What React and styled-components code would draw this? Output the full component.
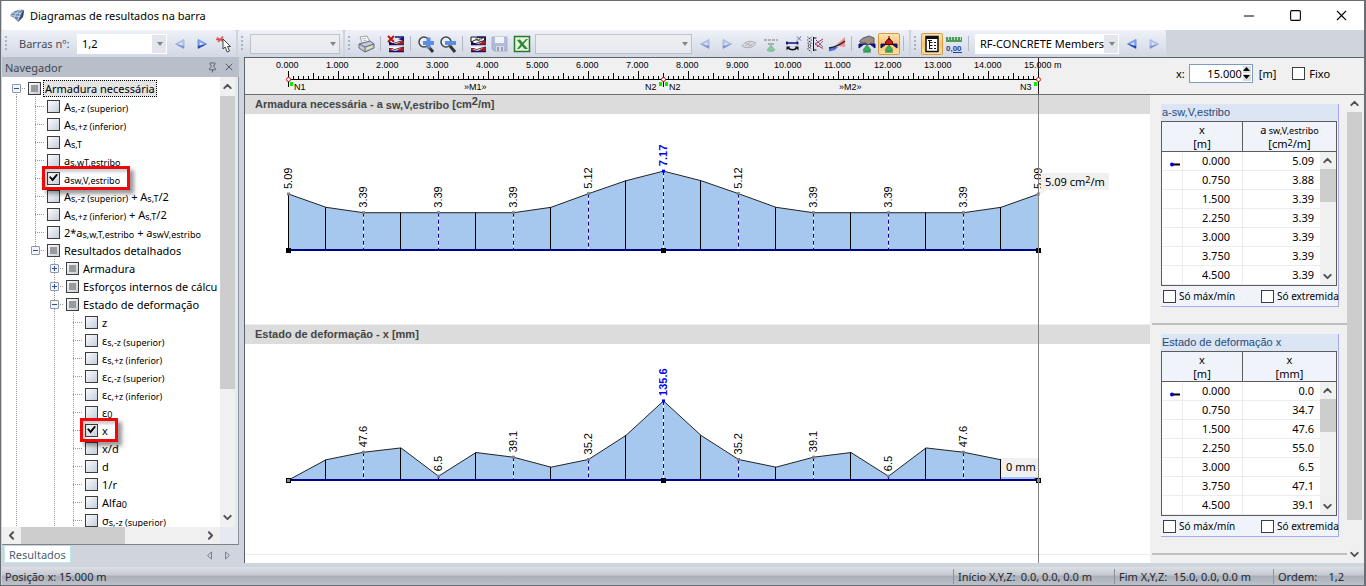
import React, { useState } from 'react';
import styled, { createGlobalStyle, css } from 'styled-components';
import { ChevronUp, ChevronDown, ChevronLeft, ChevronRight, X, Square, Minus, Pin } from 'lucide-react';

const ui = `'Noto Sans', 'Open Sans', sans-serif`;
const arial = `'Liberation Sans', Arial, sans-serif`;

const GlobalStyle = createGlobalStyle`
    * { box-sizing: border-box; }
    body { margin: 0; background: #d0d4dd; font-family: ${ui}; font-size: 11px; color: #000; }
    button, input, select { font: inherit; color: inherit; margin: 0; padding: 0; }
    button { border: 0; background: none; }
`;

const Window = styled.div`
    height: 100vh;
    display: flex;
    flex-direction: column;
    background: #d0d4dd;
    border: solid #6a6f76;
    border-width: 1px 2px 1px 1px;
    padding-left: 1px;
    overflow: hidden;
`;

const TitleBar = styled.header`
    height: 29px;
    flex: none;
    display: flex;
    align-items: center;
    background: #fff;
    padding-left: 7px;
`;

const Title = styled.h1`
    flex: 1;
    margin: 0 0 0 5px;
    font-size: 11px;
    font-weight: 400;
`;

const WindowButton = styled.button`
    width: 46px;
    height: 29px;
    display: grid;
    place-items: center;
`;

const Toolbars = styled.div`
    height: 27px;
    flex: none;
    display: flex;
    gap: 2px;
`;

const Toolbar = styled.div`
    display: flex;
    align-items: center;
    padding-right: 1px;
    border-radius: 2px;
    background: linear-gradient(#eef1f7, #dde2ec 60%, #d2d8e4);
`;

const Grip = styled.span`
    width: 10px;
    height: 17px;
    background: radial-gradient(circle, #aab2c0 1px, transparent 1px) 2px 0 / 4px 4px repeat-y;
`;

const ToolLabel = styled.label`
    width: 63px;
    padding-left: 7px;
    color: #444a55;
`;

const Divider = styled.span`
    width: 8px;
    height: 15px;
    background: linear-gradient(#b3b9c4, #b3b9c4) 3px 0 / 1px 100% no-repeat;
`;

const IconButton = styled.button`
    width: 22px;
    height: 22px;
    display: grid;
    place-items: center;
    border-radius: 2px;
    ${p => p.$active && css`
        border: 1px solid #d89a3c;
        background: linear-gradient(#fde3b4, #fbc46c 50%, #fddf9e);
    `}
    &:disabled { opacity: 0.5; }
`;

const SelectBox = styled.div`
    position: relative;
    width: ${p => p.$width}px;
    height: 20px;
    margin: 0 2px;
`;

const Select = styled.select`
    appearance: none;
    width: 100%;
    height: 100%;
    padding: 0 4px;
    border: 1px solid #fff;
    border-radius: 0;
    background: linear-gradient(90deg, #e2e5ec, #e2e5ec) right / 14px 100% no-repeat #fff;
    &:disabled {
        border-color: #b0b4ba;
        background: #eff0f2;
    }
`;

const SelectArrow = styled.span`
    position: absolute;
    right: 4px;
    top: 8px;
    border: 3px solid transparent;
    border-top: 4px solid #80848c;
    border-bottom: 0;
    pointer-events: none;
`;

const Body = styled.div`
    flex: 1;
    min-height: 0;
    display: flex;
`;

const Sidebar = styled.aside`
    width: 237px;
    flex: none;
    margin-right: 5px;
    display: flex;
    flex-direction: column;
`;

const SideHeader = styled.div`
    height: 20px;
    flex: none;
    display: flex;
    align-items: center;
    gap: 5px;
    padding: 0 4px 0 3px;
    background: #b8bfca;
    color: #3f4650;
    h2 { flex: 1; margin: 0; font-size: 11px; font-weight: 400; }
    button { display: grid; color: #555b65; }
`;

const TreePanel = styled.div`
    flex: 1;
    min-height: 0;
    display: grid;
    grid-template: minmax(0, 1fr) 17px / minmax(0, 1fr) 15px;
    padding-right: 3px;
    background: #e6e9ef;
    border-right: 1px solid #8e949e;
    border-bottom: 1px solid #7d828a;
`;

const Tree = styled.ul`
    margin: 0;
    padding: 2px 0 0 5px;
    list-style: none;
    overflow: hidden;
    background: #fff;
`;

const TreeRow = styled.li`
    height: 18px;
    display: flex;
    white-space: nowrap;
`;

const dotted = 'repeating-linear-gradient(#999 0 1px, transparent 1px 2px)';
const dottedH = 'repeating-linear-gradient(90deg, #999 0 1px, transparent 1px 2px)';

const Guide = styled.span`
    width: 19px;
    height: 18px;
    flex: none;
    display: grid;
    place-items: center;
    background-repeat: no-repeat;
    background-image: ${dotted}, ${dottedH};
    background-position: 9px ${p => (p.$line === 'bottom' ? '9px' : '0')}, 9px 9px;
    background-size: ${p => (p.$line === 'none' ? '0 0' : p.$line === 'full' ? '1px 18px' : '1px 9px')},
        ${p => (p.$elbow ? '10px 1px' : '0 0')};
`;

const Expander = styled.button`
    width: 9px;
    height: 9px;
    border: 1px solid #8f98a6;
    border-radius: 1px;
    background:
        linear-gradient(#2a50a8, #2a50a8) center / 5px 1px no-repeat,
        linear-gradient(#2a50a8, #2a50a8) center / 1px ${p => (p.$open ? 0 : 5)}px no-repeat,
        #f4f5f8;
`;

const Check = styled.input`
    appearance: none;
    flex: none;
    width: 13px;
    height: 13px;
    border: 1px solid #3d3d3d;
    background: ${p => (p.$flat ? '#fff' : 'linear-gradient(135deg, #fafbfc, #c6cedb)')};
    display: grid;
    place-items: center;
    &::before {
        content: '';
        width: ${p => (p.$partial ? 7 : 9)}px;
        height: ${p => (p.$partial ? 7 : 9)}px;
        ${p => p.$partial && 'background: #9a9a9a;'}
    }
    &:checked::before {
        background: #000;
        clip-path: polygon(0 40%, 18% 30%, 38% 55%, 82% 5%, 100% 15%, 40% 90%);
    }
`;

const TreeItem = styled.label`
    position: relative;
    display: flex;
    align-items: center;
    gap: 2px;
    margin-left: 2px;
    ${p => p.$marked && css`
        z-index: 1;
        &::after {
            content: '';
            position: absolute;
            inset: -3px -8px -3px -5px;
            border: 3px solid #f00808;
            box-shadow: 4px 4px 4px rgba(0, 0, 0, 0.4), inset 3px 3px 3px rgba(0, 0, 0, 0.2);
        }
    `}
`;

const ItemText = styled.span`
    padding: 0 1px;
    line-height: 15px;
    border: 1px solid transparent;
    ${p => p.$focus && 'border: 1px dotted #000; background: #e4e4e4;'}
    sub {
        font-size: 9px;
        line-height: 9px;
        vertical-align: -1px;
    }
`;

const ScrollTrack = styled.div`
    display: flex;
    flex-direction: ${p => (p.$horizontal ? 'row' : 'column')};
    background: #f0f0f0;
    button {
        flex: none;
        width: ${p => (p.$horizontal ? p.$end : 15)}px;
        height: ${p => (p.$horizontal ? 17 : p.$end)}px;
        display: grid;
        place-items: center;
        color: #505050;
    }
`;

const ScrollRail = styled.div`
    flex: 1;
    min-width: 0;
    min-height: 0;
`;

const ScrollThumb = styled.div`
    background: #cdcdcd;
    ${p => (p.$horizontal ? `width: ${p.$size}%; height: 100%;` : `height: ${p.$size}%;`)}
`;

const SideTabs = styled.div`
    height: 22px;
    flex: none;
    display: flex;
    align-items: flex-start;
    padding: 1px 4px 0 2px;
    gap: 2px;
`;

const Tab = styled.button`
    height: 17px;
    padding: 0 4px;
    margin-right: auto;
    color: #4a5f75;
    background: #fff;
    border: solid #b8e8ec;
    border-width: 0 1px 1px;
    border-radius: 0 0 2px 2px;
`;

const TabArrow = styled.button`
    width: 16px;
    height: 18px;
    display: grid;
    place-items: center;
`;

const Main = styled.main`
    flex: 1;
    min-width: 0;
    display: flex;
    flex-direction: column;
    border: solid #5e6268;
    border-width: 1px 0 0 1px;
    margin-bottom: 4px;
    background: #f0f0f0;
`;

const RulerRow = styled.div`
    height: 37px;
    flex: none;
    display: flex;
    border-bottom: 1px solid #6e6e6e;
`;

const Ruler = styled.svg`
    flex: 1;
    min-width: 0;
    height: 36px;
    font-family: ${arial};
    font-size: 9px;
`;

const Position = styled.div`
    width: 214px;
    display: flex;
    align-items: center;
    padding: 0 0 6px 26px;
    label { display: flex; align-items: center; gap: 4px; }
`;

const NumberBox = styled.span`
    width: 64px;
    height: 19px;
    display: flex;
    border: 1px solid #7a9cc4;
    background: #fff;
    margin-right: 6px;
    input {
        width: 52px;
        border: 0;
        background: none;
        text-align: right;
        outline: none;
    }
`;

const Spin = styled.span`
    display: flex;
    flex-direction: column;
    gap: 1px;
    margin-left: 1px;
    padding: 1px 0;
    button {
        width: 8px;
        height: 7px;
        display: grid;
        place-items: center;
        background: #dcdcdc;
    }
`;

const FixedLabel = styled.label`
    margin-left: 16px;
`;

const Results = styled.div`
    flex: 1;
    min-height: 0;
    display: flex;
    padding-right: 2px;
`;

const Sections = styled.div`
    position: relative;
    flex: 1;
    min-width: 0;
    overflow: hidden;
    background: linear-gradient(90deg, #fff, #fff) left / calc(100% - 197px) 100% no-repeat #f0f0f0;
`;

const CursorLine = styled.div`
    position: absolute;
    top: 0;
    bottom: 0;
    left: 793px;
    width: 1px;
    background: #808080;
`;

const Section = styled.section`
    height: 230px;
    display: flex;
`;

const ChartArea = styled.div`
    flex: 1;
    min-width: 0;
    border-bottom: 1px solid #ececec;
`;

const ChartTitle = styled.h3`
    height: 19px;
    margin: 0;
    padding-left: 10px;
    background: #dcdcdc;
    font: bold 11px/19px ${arial};
    color: #444;
    sub, sup { font-size: 11px; line-height: 10px; }
    sub { vertical-align: -1px; }
    sup { vertical-align: 3px; }
`;

const Plot = styled.svg`
    display: block;
    width: 100%;
    height: 210px;
    font-family: ${arial};
    font-size: 11px;
`;

const SidePanel = styled.div`
    width: 195px;
    margin-left: 2px;
    padding: 9px 8px 0 9px;
    border-bottom: 2px solid #c0c0c0;
`;

const Group = styled.div`
    height: 203px;
    background: #f0f4fa;
    border: solid #a8a8ee;
    border-width: 0 1px 1px 0;
`;

const GroupTitle = styled.h4`
    height: 17px;
    margin: 0;
    padding-left: 1px;
    background: #dbe5f3;
    font: 11px/17px ${arial};
    color: #1f4a7a;
`;

const GridBox = styled.div`
    position: relative;
    height: 165px;
    border: 1px solid #5c5c5c;
    margin-right: 1px;
    overflow: hidden;
    background: #fff;
`;

const Grid = styled.table`
    width: 100%;
    border-collapse: separate;
    border-spacing: 0;
    table-layout: fixed;
    th {
        height: 30px;
        padding: 0;
        font-weight: 400;
        line-height: 14px;
        background: #f0f4fa;
        border-bottom: 1px solid #5c5c5c;
    }
    th + th { border-left: 1px solid #5c5c5c; }
    sub, sup { font-size: 9px; line-height: 9px; }
    sub { vertical-align: 0; }
    sup { vertical-align: 2px; }
    td {
        height: 19px;
        padding: 0 12px 0 0;
        line-height: 16px;
        text-align: right;
        border-bottom: 1px solid #ececec;
        border-left: 1px solid #ececec;
    }
    td:first-child { border-left: 0; padding: 3px 0 0 7px; text-align: left; line-height: 8px; }
    td:last-child { padding-right: 22px; }
`;

const GridScroll = styled.div`
    position: absolute;
    top: 30px;
    right: 0;
    bottom: 0;
    width: 16px;
    display: grid;
`;

const Filters = styled.div`
    height: 20px;
    display: flex;
    align-items: center;
    padding-left: 2px;
    font-size: 10px;
    label {
        width: 98px;
        flex: none;
        display: flex;
        align-items: center;
        gap: 3px;
        white-space: nowrap;
    }
    label:last-child { width: 76px; }
`;

const StatusBar = styled.footer`
    height: 18px;
    flex: none;
    display: flex;
    align-items: center;
    padding-left: 3px;
    background: linear-gradient(#dcdfe4, #c5c9d0 45%, #a9aeb7 50%, #bcc1ca);
    color: #222832;
`;

const StatusCell = styled.span`
    width: ${p => p.$width}px;
    display: flex;
    justify-content: space-between;
    padding: 0 ${p => p.$pad || 22}px 0 4px;
    border-left: 1px solid #8c929c;
    white-space: nowrap;
    &:first-child {
        flex: 1;
        border: 0;
        padding: 0;
    }
`;

// "A_{s,T}/2" -> A<sub>s,T</sub>/2, "^{..}" gives a superscript
const Formula = ({ text }) => (
    <>
        {text.split(/([_^]\{[^}]*\})/).map((part, i) => {
            if (part.startsWith('_{')) return <sub key={i}>{part.slice(2, -1)}</sub>;
            if (part.startsWith('^{')) return <sup key={i}>{part.slice(2, -1)}</sup>;
            return part;
        })}
    </>
);

const treeRows = [
    { level: 0, text: 'Armadura necessária', open: true, partial: true, focus: true },
    { level: 1, text: 'A_{s,-z (superior)}' },
    { level: 1, text: 'A_{s,+z (inferior)}' },
    { level: 1, text: 'A_{s,T}' },
    { level: 1, text: 'a_{s,wT,estribo}' },
    { level: 1, text: 'a_{sw,V,estribo}', checked: true },
    { level: 1, text: 'A_{s,-z (superior)} + A_{s,T}/2' },
    { level: 1, text: 'A_{s,+z (inferior)} + A_{s,T}/2' },
    { level: 1, text: '2*a_{s,w,T,estribo} + a_{swV,estribo}' },
    { level: 1, text: 'Resultados detalhados', open: true, partial: true, last: true },
    { level: 2, text: 'Armadura', open: false, partial: true },
    { level: 2, text: 'Esforços internos de cálcu', open: false, partial: true },
    { level: 2, text: 'Estado de deformação', open: true, partial: true },
    { level: 3, text: 'z' },
    { level: 3, text: 'ε_{s,-z (superior)}' },
    { level: 3, text: 'ε_{s,+z (inferior)}' },
    { level: 3, text: 'ε_{c,-z (superior)}' },
    { level: 3, text: 'ε_{c,+z (inferior)}' },
    { level: 3, text: 'ε_{0}' },
    { level: 3, text: 'x', checked: true },
    { level: 3, text: 'x/d' },
    { level: 3, text: 'd' },
    { level: 3, text: '1/r' },
    { level: 3, text: 'Alfa_{0}' },
    { level: 3, text: 'σ_{s,-z (superior)}' },
];

const SCALE = 50;
const X0 = 43;
const BASE = 136;
const mirror = half => [...half, ...half.slice(0, -1).reverse()];

const sections = [
    {
        id: 'asw',
        title: 'Armadura necessária - a_{ sw,V,estribo} [cm^{2}/m]',
        group: 'a-sw,V,estribo',
        column: 'a_{ sw,V,estribo}',
        unit: '[cm^{2}/m]',
        values: mirror([5.09, 3.88, 3.39, 3.39, 3.39, 3.39, 3.39, 3.88, 5.12, 6.3, 7.17]),
        digits: 2,
        factor: 11,
    },
    {
        id: 'def',
        title: 'Estado de deformação - x [mm]',
        group: 'Estado de deformação x',
        column: 'x',
        unit: '[mm]',
        values: mirror([0, 34.7, 47.6, 55.0, 6.5, 47.1, 39.1, 22, 35.2, 76.5, 135.6]),
        digits: 1,
        factor: 0.583,
    },
];

const Scrollbar = ({ horizontal, size, end = 17 }) => {
    const Back = horizontal ? ChevronLeft : ChevronUp;
    const Forward = horizontal ? ChevronRight : ChevronDown;
    return <ScrollTrack $horizontal={horizontal} $end={end}>
        <button aria-label="Anterior"><Back size={13} strokeWidth={3.5} /></button>
        <ScrollRail><ScrollThumb $horizontal={horizontal} $size={size} /></ScrollRail>
        <button aria-label="Seguinte"><Forward size={13} strokeWidth={3.5} /></button>
    </ScrollTrack>;
};

const Icon = ({ children }) => <svg width="18" height="18" viewBox="0 0 18 18">{children}</svg>;

const Arrow = ({ flip }) => (
    <Icon>
        {flip
            ? <>
                <path d="M13 4.500v9L4.500 9z" fill="#8fb0ec" stroke="#5b7fd0" strokeWidth="0.800" />
                <path d="M13 13.500 4.500 9l8.500 2z" fill="#1c3fae" />
                <path d="M11 7.500v3L8 9z" fill="#e3ecfb" />
            </>
            : <>
                <path d="M5 4.500v9L13.500 9z" fill="#8fb0ec" stroke="#5b7fd0" strokeWidth="0.800" />
                <path d="M5 13.500 13.500 9 5 11z" fill="#1c3fae" />
                <path d="M7 7.500v3L10 9z" fill="#e3ecfb" />
            </>}
    </Icon>
);

const PickIcon = () => (
    <Icon>
        <path d="M2 2.500l6 4M8 1.500 3 7M1 4.500h8" stroke="#d85050" strokeWidth="1.500" />
        <path d="M8 4v10l2.200-2 2 5 2.300-1-2-4.500h3z" fill="#fff" stroke="#444" />
    </Icon>
);

const PrinterIcon = () => (
    <Icon>
        <path d="M3 2l7-1 3 6-7 3z" fill="#fff" stroke="#888" strokeWidth="0.800" />
        <path d="M2 9l11-3 4 3v4l-9 4-6-4z" fill="#c5c9d8" stroke="#62687c" />
        <path d="M2 9l6 3 9-3M8 12v5" stroke="#62687c" fill="none" />
        <path d="M9 14l6-2.500" stroke="#e8e8a0" strokeWidth="1.500" />
        <path d="M5 4l4-.7M6 6l4-1" stroke="#9aa" strokeWidth="0.800" />
    </Icon>
);

const DiagramIcon = ({ flag }) => (
    <Icon>
        <path d="M2 6.500h15v4H2zM2 12h15v4H2z" fill="#fff" />
        <path d="M8 2h9M2 9.500h15M2 16.500h15" stroke="#10107a" strokeWidth="1.500" />
        <path d="M17 2v4l-6-2 6-2M2 6v3h5z" fill="#10107a" />
        <path d="M17 5.500v4H9c2-1 4-3 8-4z" fill="#b01818" />
        <path d="M2 16v-3h5zM17 12v4H9c2-1 4-3 8-4z" fill="#b01818" />
        <path d="M2 16c6-1 9-3 15-4M2 9.500c6-1 9-3 15-4" stroke="#200" strokeWidth="0.800" fill="none" />
        {flag
            ? <>
                <path d="M2 7V2h5c2 0 3 1 5 1s3-1 4 1c-2 3-5 3-7 1-3-1-4 1-7 2z" fill="#fff" stroke="#111" />
                <path d="M7 3v2M9 4v2M11 4v2M13 3v2M8 4h5" stroke="#111" strokeWidth="0.700" strokeDasharray="1 1" />
            </>
            : <path d="M1 1l6 6M7 1 1 7" stroke="#b81414" strokeWidth="2" />}
    </Icon>
);

const ZoomIcon = ({ plus }) => (
    <Icon>
        <circle cx="7" cy="7" r="5" fill="#e8effa" stroke="#444" strokeWidth="1.500" />
        <path d="M11 11l5 6" stroke="#333" strokeWidth="3" />
        <path d="M6 8h11" stroke="#5b8de0" strokeWidth="4" />
        {plus && <path d="M11.500 2.500v11" stroke="#5b8de0" strokeWidth="4" />}
    </Icon>
);

const SaveIcon = () => (
    <Icon>
        <path d="M1 2h15v14H3l-2-2z" fill="#8593c4" stroke="#6c7cb0" />
        <path d="M4 2h9v6H4z" fill="#fff" />
        <path d="M5 11h8v5H5z" fill="#d5d8e2" />
        <path d="M6 12h2v4H6zM10 12h2v4h-2z" fill="#666" />
    </Icon>
);

const ExcelIcon = () => (
    <Icon>
        <path d="M1.500 1.500h15v15h-15z" fill="#e6f3e0" stroke="#287a2c" strokeWidth="1.500" />
        <path d="M4 5l3-.5 2.500 3L13 4h2l-4.500 5 4.500 5h-3.500L9 11l-3 3H4l3.500-4.500z" fill="#2c8a30" />
    </Icon>
);

const EyeIcon = () => (
    <Icon>
        <path d="M2 11c3-5 9-6 14-3-3 5-9 6-14 3z" fill="#ddd" stroke="#777" />
        <path d="M5 11l6-4M8 12l6-4M5 8l7 3" stroke="#888" />
    </Icon>
);

const Cone = () => <path d="M9 10l4 5c-2 2-6 2-8 0z" fill="#38b058" stroke="#1b7a38" strokeWidth="0.600" />;

const SupportIcon = () => (
    <Icon>
        <path d="M2 5h14" stroke="#555" strokeWidth="1.500" strokeDasharray="3 1" />
        <path d="M6 8h6v2H6z" fill="#777" />
        <Cone />
    </Icon>
);

const BeamIcon = () => (
    <Icon>
        <path d="M2 8h12M3 6.500v3M13.500 6.500v3" stroke="#10107a" strokeWidth="1.700" />
        <path d="M13 1.500l4 4M17 1.500l-4 4" stroke="#3a50b0" strokeDasharray="2 0.500" />
        <path d="M4 12.500c2 3 7 3 9 0" stroke="#111" fill="none" strokeWidth="1.500" />
        <path d="M2.500 15.500v-4h4zM14.500 15.500v-4h-4z" fill="#111" />
    </Icon>
);

const SectionCutIcon = () => (
    <Icon>
        <path d="M7.500 2v14M7.500 3h3M7.500 15h3" stroke="#111" fill="none" />
        <path d="M1.500 2l4 3-4 3 4 3-4 3 4 3M5.500 2l-4 3 4 3-4 3 4 3" stroke="#222" fill="none" strokeDasharray="1.200 1" />
        <path d="M9 9l8-5M9 9l8 4.500" stroke="#d82020" />
        <path d="M10 5l7 7M11 12l6-6" stroke="#3838c8" strokeDasharray="2 1" />
    </Icon>
);

const SlopeIcon = () => (
    <Icon>
        <path d="M7 11 17 2v10l-7-1z" fill="#ef8f94" />
        <path d="M1 12h9l-3 3-6 1.500z" fill="#5a6adc" />
        <path d="M1 13c7-1 11-3 16-7" stroke="#222" fill="none" strokeWidth="1.500" />
    </Icon>
);

const LoadIcon = ({ red }) => (
    <Icon>
        <path d="M1 9h16v4l-5-4H6l-5 4z" fill="#10107a" stroke="#10107a" />
        {red
            ? <path d="M9 1v4M5.500 9.500V7L9 3l3.500 4v2.500z" fill="#c81e1e" stroke="#400" />
            : <path d="M3 8 1.500 6 5 3l6-2 5 2v6l-3-1-3 2-2-2z" fill="#9b8f84" stroke="#444" strokeWidth="0.800" />}
        <Cone />
        <path d="M5 17h8" stroke="#147a34" />
    </Icon>
);

const TreeIcon = () => (
    <Icon>
        <path d="M3 1.500h12v15H3z" fill="#fff" stroke="#111" strokeWidth="1.500" />
        <path d="M3 3h12" stroke="#111" strokeWidth="2" />
        <path d="M6.500 5v9M6.500 7.500h3M6.500 10.500h3M6.500 13.500h3M11 7.500h2M11 10.500h2M11 13.500h2M5 5.500h4" stroke="#111" />
    </Icon>
);

const DecimalsIcon = () => (
    <Icon>
        <path d="M1 2h16v5H1z" fill="#4f9a5c" />
        <path d="M3.500 2v3M6.500 2v3M9.500 2v3M12.500 2v3M15.500 2v3" stroke="#d9f0dc" strokeWidth="0.800" />
        <text x="1" y="16" fontSize="8" fontWeight="bold" fontFamily={arial} fill="#223a9c">0,00</text>
        <path d="M8 17.500h9" stroke="#223a9c" />
    </Icon>
);

const AppIcon = () => (
    <svg width="16" height="16" viewBox="0 0 16 16">
        <path d="M1 8C3 3 9 1 15 2l-1 7-5 5c-2-3-5-5-8-6z" fill="#6c87ad" />
        <path d="M1 8c5-1 9 1 13 1M3 5c5 0 9 0 11 2M9 14c0-5 2-9 6-12M5 10c1-4 4-7 7-8" stroke="#dce5f2" strokeWidth="0.800" fill="none" />
        <path d="M14 2l1 1-1 6-5 5z" fill="#344c74" />
    </svg>
);

const Combo = ({ width, label, id, value }) => (
    <SelectBox $width={width}>
        <Select id={id} aria-label={label} disabled={!value}>
            <option>{value}</option>
        </Select>
        <SelectArrow />
    </SelectBox>
);

const Tool = ({ label, children, ...rest }) => (
    <IconButton aria-label={label} {...rest}>{children}</IconButton>
);

const Toolbox = () => (
    <Toolbars>
        <Toolbar>
            <Grip />
            <ToolLabel htmlFor="members">Barras nº:</ToolLabel>
            <Combo id="members" width={90} value="1,2" />
            <Tool label="Barra anterior" disabled><Arrow flip /></Tool>
            <Tool label="Próxima barra"><Arrow /></Tool>
            <Tool label="Selecionar"><PickIcon /></Tool>
        </Toolbar>
        <Toolbar>
            <Grip />
            <Combo label="Caso de carga" width={90} />
        </Toolbar>
        <Toolbar>
            <Grip />
            <Tool label="Imprimir"><PrinterIcon /></Tool>
            <Divider />
            <Tool label="Apagar diagramas"><DiagramIcon /></Tool>
            <Divider />
            <Tool label="Ampliar"><ZoomIcon plus /></Tool>
            <Tool label="Reduzir"><ZoomIcon /></Tool>
            <Divider />
            <Tool label="Configurar diagramas"><DiagramIcon flag /></Tool>
            <Tool label="Guardar" disabled><SaveIcon /></Tool>
            <Tool label="Exportar para Excel"><ExcelIcon /></Tool>
            <Combo label="Configuração" width={157} />
            <Tool label="Anterior" disabled><Arrow flip /></Tool>
            <Tool label="Seguinte" disabled><Arrow /></Tool>
            <Tool label="Vista" disabled><EyeIcon /></Tool>
            <Tool label="Apoios" disabled><SupportIcon /></Tool>
            <Tool label="Barras"><BeamIcon /></Tool>
            <Tool label="Secção"><SectionCutIcon /></Tool>
            <Tool label="Declive"><SlopeIcon /></Tool>
            <Divider />
            <Tool label="Cargas"><LoadIcon /></Tool>
            <Tool label="Reações" $active><LoadIcon red /></Tool>
            <Divider />
        </Toolbar>
        <Toolbar>
            <Grip />
            <Tool label="Navegador" $active><TreeIcon /></Tool>
            <Tool label="Casas decimais"><DecimalsIcon /></Tool>
            <Divider />
            <Combo label="Módulo" width={144} value="RF-CONCRETE Members" />
            <Tool label="Módulo anterior"><Arrow flip /></Tool>
            <Tool label="Próximo módulo" disabled><Arrow /></Tool>
        </Toolbar>
    </Toolbars>
);

// vertical guides of the ancestors: only the root and the level 2 branch go on below
const ancestorLine = level => (level === 1 ? 'none' : 'full');

const TreeNode = ({ row }) => {
    const { level, text, open, partial, checked, focus, last } = row;
    const hasChildren = open !== undefined;
    let own = 'full';
    if (level === 0) own = 'bottom';
    if (last) own = 'top';
    return <TreeRow>
        {Array.from({ length: level }, (_, i) => <Guide key={i} $line={ancestorLine(i)} />)}
        <Guide $line={own} $elbow>
            {hasChildren && <Expander $open={open} aria-label={open ? 'Fechar' : 'Abrir'} />}
        </Guide>
        <TreeItem $marked={checked}>
            <Check type="checkbox" defaultChecked={checked} $partial={partial} />
            <ItemText $focus={focus}><Formula text={text} /></ItemText>
        </TreeItem>
    </TreeRow>;
};

const Navigator = () => (
    <Sidebar>
        <SideHeader>
            <h2>Navegador</h2>
            <button aria-label="Fixar"><Pin size={11} /></button>
            <button aria-label="Fechar"><X size={12} /></button>
        </SideHeader>
        <TreePanel>
            <Tree>
                {treeRows.map((row, i) => <TreeNode key={i} row={row} />)}
            </Tree>
            <Scrollbar size={71} end={19} />
            <Scrollbar horizontal size={58} end={19} />
        </TreePanel>
        <SideTabs>
            <Tab>Resultados</Tab>
            <TabArrow aria-label="Separador anterior">
                <svg width="7" height="9"><path d="M5.500 1v7L1.500 4.500z" fill="none" stroke="#777e8a" /></svg>
            </TabArrow>
            <TabArrow aria-label="Próximo separador">
                <svg width="7" height="9"><path d="M1.500 1v7l4-3.500z" fill="none" stroke="#777e8a" /></svg>
            </TabArrow>
        </SideTabs>
    </Sidebar>
);

const RulerScale = () => {
    const ticks = Array.from({ length: 151 }, (_, i) => {
        const h = i % 10 === 0 ? 8 : i % 5 === 0 ? 6 : 3;
        return `M${X0 + 0.5 + i * 5} ${21 - h}V21`;
    }).join('');
    return <Ruler role="img" aria-label="Escala">
        <path d={ticks} stroke="#000" />
        <path d={`M${X0} 21.500h751`} stroke="#000" />
        {Array.from({ length: 16 }, (_, i) => (
            <text key={i} x={X0 + i * SCALE - 12 - (i > 9 ? 2 : 0)} y="10">{i}.000{i === 15 && ' m'}</text>
        ))}
        {[0, 7.5, 15].map(x => (
            <g key={x}>
                <path d={`M${X0 + 0.5 + x * SCALE} 15v14`} stroke="#000" />
                <circle cx={X0 + 0.5 + x * SCALE} cy="21.5" r="2" fill="#fff" stroke="#e01010" />
            </g>
        ))}
        <path d={`M${X0 + 2} 24h3v4h-3zM${X0 + 371} 24h3v4h-3zM${X0 + 377} 24h3v4h-3zM${X0 + 746} 24h3v4h-3z`} fill="#0e0" />
        <path d={`M${X0 + 750.5} 0v14M${X0 + 750.5} 28v8`} stroke="#222" />
        <text x="49" y="32">N1</text>
        <text x="219" y="32">»M1»</text>
        <text x="400" y="32">N2</text>
        <text x="424" y="32">N2</text>
        <text x="594" y="32">»M2»</text>
        <text x="775" y="32">N3</text>
    </Ruler>;
};

const Diagram = ({ section }) => {
    const { values, factor, digits, id } = section;
    const points = values.map((v, i) => [X0 + 0.5 + i * 37.5, BASE - v * factor]);
    const outline = points.map(p => p.join(',')).join(' ');
    const right = X0 + 750.5;
    const endFill = id === 'def' ? '#888' : '#000';
    return <Plot role="img" aria-label={section.group}>
        <polygon points={`${X0 + 0.5},${BASE} ${outline} ${right},${BASE}`} fill="#a6c8ee" />
        <polyline points={outline} fill="none" stroke="#222" />
        {points.map(([x, y], i) => {
            const peak = i === 10;
            const inner = i % 2 === 0 && i > 0 && i < 20;
            return <g key={i}>
                {inner
                    ? <>
                        <path d={`M${x} ${y}V${BASE}`} stroke="#fff" />
                        <path d={`M${x} ${y}V${BASE}`} stroke="#00008b" strokeDasharray="4 3" />
                    </>
                    : <path d={`M${Math.ceil(x) - 0.5} ${y}V${BASE}`} stroke="#000" />}
                {i % 2 === 0 && values[i] > 0 && <>
                    <rect x={x - 1.5} y={y - 1.5} width="3" height="3" fill={peak ? '#00f' : '#808080'} />
                    <text
                        transform={`translate(${x + 3.5} ${y - 5}) rotate(-90)`}
                        fill={peak ? '#0000f0' : '#000'}
                        fontWeight={peak ? 'bold' : 'normal'}
                    >
                        {values[i].toFixed(digits)}
                    </text>
                </>}
            </g>;
        })}
        <path d={`M${X0} ${BASE}h751`} stroke="#00008b" strokeWidth="2" />
        {[0, 375, 750].map(x => (
            <rect key={x} x={X0 - 1.5 + x} y={BASE - 1.5} width="4" height="4" fill={x === 375 ? '#000' : endFill} stroke="#000" />
        ))}
        {id === 'asw'
            ? <>
                <path d="M796 59h68v17h-62l-8 5 2-5z" fill="#f0f0f0" />
                <text x="800" y="72" fontFamily={ui}>5.09 cm<tspan fontSize="9" dy="-3">2</tspan><tspan dy="3">/m</tspan></text>
            </>
            : <>
                <path d="M756 115h37v19h-37z" fill="#a6c8ee" />
                <path d="M756 114h37v19h-37z" fill="#f0f0f0" />
                <path d={`M755.500 115v${BASE - 116}`} stroke="#000" />
                <text x="761" y="127" fontFamily={ui}>0 mm</text>
            </>}
    </Plot>;
};

const ValueTable = ({ section }) => (
    <Group>
        <GroupTitle>{section.group}</GroupTitle>
        <GridBox>
            <Grid>
                <colgroup>
                    <col width="20" />
                    <col width="60" />
                    <col />
                </colgroup>
                <thead>
                    <tr>
                        <th colSpan="2">x<br />[m]</th>
                        <th><Formula text={section.column} /><br /><Formula text={section.unit} /></th>
                    </tr>
                </thead>
                <tbody>
                    {section.values.slice(0, 7).map((v, i) => (
                        <tr key={i}>
                            <td>
                                {i === 0 && <svg width="11" height="5"><path d="M2 2.500h9" stroke="#000" strokeWidth="2" /><circle cx="3" cy="2.500" r="2" fill="#0000d0" /></svg>}
                            </td>
                            <td>{(i * 0.75).toFixed(3)}</td>
                            <td>{v.toFixed(section.digits)}</td>
                        </tr>
                    ))}
                </tbody>
            </Grid>
            <GridScroll><Scrollbar size={33} /></GridScroll>
        </GridBox>
        <Filters>
            <label><Check type="checkbox" $flat />Só máx/mín</label>
            <label><Check type="checkbox" $flat />Só extremida</label>
        </Filters>
    </Group>
);

const App = () => {
    const [position, setPosition] = useState('15.000');

    const step = (delta) => {
        const next = Math.min(15, Math.max(0, Number(position) + delta));
        setPosition(next.toFixed(3));
    };

    return <>
        <GlobalStyle />
        <Window>
            <TitleBar>
                <AppIcon />
                <Title>Diagramas de resultados na barra</Title>
                <WindowButton aria-label="Minimizar"><Minus size={16} strokeWidth={1.5} /></WindowButton>
                <WindowButton aria-label="Maximizar"><Square size={13} strokeWidth={2} strokeLinejoin="miter" /></WindowButton>
                <WindowButton aria-label="Fechar"><X size={17} strokeWidth={1.5} /></WindowButton>
            </TitleBar>
            <Toolbox />
            <Body>
                <Navigator />
                <Main>
                    <RulerRow>
                        <RulerScale />
                        <Position>
                            <label>
                                x:
                                <NumberBox>
                                    <input value={position} onChange={(e) => setPosition(e.target.value)} />
                                    <Spin>
                                        <button aria-label="Aumentar" onClick={() => step(0.75)}>
                                            <svg width="7" height="4"><path d="M0 4h7L3.500 0z" /></svg>
                                        </button>
                                        <button aria-label="Diminuir" onClick={() => step(-0.75)}>
                                            <svg width="7" height="4"><path d="M0 0h7L3.500 4z" /></svg>
                                        </button>
                                    </Spin>
                                </NumberBox>
                            </label>
                            [m]
                            <FixedLabel><Check type="checkbox" $flat />Fixo</FixedLabel>
                        </Position>
                    </RulerRow>
                    <Results>
                        <Sections>
                            {sections.map(section => (
                                <Section key={section.id}>
                                    <ChartArea>
                                        <ChartTitle><Formula text={section.title} /></ChartTitle>
                                        <Diagram section={section} />
                                    </ChartArea>
                                    <SidePanel>
                                        <ValueTable section={section} />
                                    </SidePanel>
                                </Section>
                            ))}
                            <CursorLine />
                        </Sections>
                        <Scrollbar size={94} />
                    </Results>
                </Main>
            </Body>
            <StatusBar>
                <StatusCell>Posição x: 15.000 m</StatusCell>
                <StatusCell $width={161}><span>Início X,Y,Z:</span><span>0.0, 0.0, 0.0 m</span></StatusCell>
                <StatusCell $width={159}><span>Fim X,Y,Z:</span><span>15.0, 0.0, 0.0 m</span></StatusCell>
                <StatusCell $width={91} $pad={20}><span>Ordem:</span><span>1,2</span></StatusCell>
            </StatusBar>
        </Window>
    </>;
};

export default App;
